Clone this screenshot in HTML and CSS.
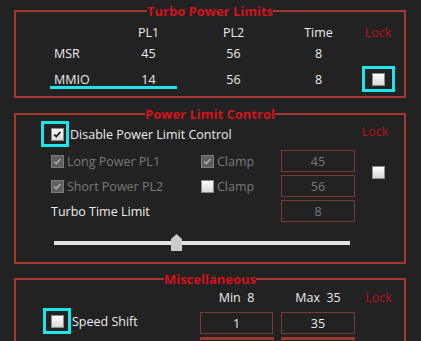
FILE: index.html
```html
<!DOCTYPE html>
<html>
<head>
<meta charset="utf-8">
<title>Power Limits</title>
<link rel="stylesheet" href="styles.css">
</head>
<body>
<div class="app">

  <fieldset class="group turbo">
    <legend>Turbo Power Limits</legend>
    <div class="limits">
      <span></span><span class="num">PL1</span><span class="num">PL2</span><span class="num">Time</span><span class="lock">Lock</span>
      <span class="label">MSR</span><span class="num">45</span><span class="num">56</span><span class="num">8</span><span></span>
      <span class="label">MMIO</span><span class="num">14</span><span class="num">56</span><span class="num">8</span>
      <span class="lockbox"><span class="mark mark-end"><span class="cb"></span></span></span>
    </div>
  </fieldset>

  <fieldset class="group plc">
    <legend>Power Limit Control</legend>
    <div class="plc-grid">
      <label class="opt wide">
        <span class="mark mark-a"><span class="cb on"><svg viewBox="0 0 13 13"><polyline points="2.5,6.5 5,9 10,3.5"/></svg></span></span>
        <span class="txt">Disable Power Limit Control</span>
      </label>
      <span class="lock up">Lock</span>

      <label class="opt dim">
        <span class="cb dis"><svg viewBox="0 0 13 13"><polyline points="2.5,6.5 5,9 10,3.5"/></svg></span>
        <span class="txt">Long Power PL1</span>
      </label>
      <label class="opt dim">
        <span class="cb dis"><svg viewBox="0 0 13 13"><polyline points="2.5,6.5 5,9 10,3.5"/></svg></span>
        <span class="txt">Clamp</span>
      </label>
      <span class="field">45</span>
      <span class="lock side"><span class="cb"></span></span>

      <label class="opt dim">
        <span class="cb dis"><svg viewBox="0 0 13 13"><polyline points="2.5,6.5 5,9 10,3.5"/></svg></span>
        <span class="txt">Short Power PL2</span>
      </label>
      <label class="opt dim">
        <span class="cb"></span>
        <span class="txt">Clamp</span>
      </label>
      <span class="field">56</span>

      <span class="label span2">Turbo Time Limit</span>
      <span class="field">8</span>

      <div class="slider">
        <div class="track"></div>
        <div class="thumb"></div>
      </div>
    </div>
  </fieldset>

  <fieldset class="group misc">
    <legend>Miscellaneous</legend>
    <div class="misc-grid">
      <span></span>
      <span class="head">Min  8</span>
      <span></span>
      <span class="head">Max  35</span>
      <span class="lock">Lock</span>

      <label class="opt">
        <span class="mark mark-b"><span class="cb"></span></span>
        <span class="txt">Speed Shift</span>
      </label>
      <span class="field live low">1</span>
      <span></span>
      <span class="field live low">35</span>
      <span></span>

      <span></span>
      <span class="field next"></span>
      <span></span>
      <span class="field next"></span>
      <span></span>
    </div>
  </fieldset>

</div>
</body>
</html>
```

FILE: styles.css
```css
* { box-sizing: border-box; }
html, body {
  margin: 0; padding: 0;
}
body {
  width: 421px;
  height: 341px;
  overflow: hidden;
  background: #222222;
  color: #ececec;
  font-family: "Open Sans", "Noto Sans", sans-serif;
  font-size: 12.5px;
}

.app {
  padding: 4px 15px 0 14px;
}

.group {
  margin: 0;
  padding: 0;
  min-width: 0;
  border: 2px solid #a5372f;
}
.group legend {
  margin: 0 auto;
  padding: 0;
  font-size: 13px;
  font-weight: bold;
  line-height: 14px;
  color: #d4121c;
}
.turbo { padding: 4px 0 2px; }
.plc { margin-top: 9px; padding: 0 0 10px; }
.misc { margin-top: 8px; padding: 1px 0 20px; }

.lock {
  color: #b8121b;
  text-align: center;
  justify-self: center;
}
.lock.up { margin-bottom: 5px; }

/* turbo power limits table */
.limits {
  position: relative;
  display: grid;
  grid-template-columns: 52px 85px 85px 85px 34px;
  grid-template-rows: 21px 21px 30px;
  padding-left: 38px;
  align-items: center;
}
.num { text-align: center; }
.lockbox { justify-self: end; display: flex; }
/* cyan annotation under the MMIO row */
.limits::after {
  content: "";
  position: absolute;
  left: 34px;
  top: 64px;
  width: 127px;
  height: 3px;
  background: #1ee4ec;
}

/* cyan highlight boxes */
.mark {
  display: flex;
  align-items: center;
  border: 3px solid #1ee4ec;
  height: 26px;
}
.mark-end { width: 33px; justify-content: center; }
.mark-a { width: 28px; padding-left: 7px; margin-left: -10px; }
.mark-b { width: 28px; padding-left: 5px; margin-left: -8px; }

/* checkboxes */
.cb {
  display: inline-block;
  flex: none;
  width: 13px;
  height: 13px;
  border: 1px solid #8c8c8c;
  background: linear-gradient(#fdfdfd, #d9d9d9);
}
.cb svg {
  display: block;
  width: 11px;
  height: 11px;
  fill: none;
  stroke: #111;
  stroke-width: 2;
}
.cb.dis {
  background: #5f5f5f;
  border-color: #7c7c7c;
}
.cb.dis svg { stroke: #a9a9a9; }

.opt {
  display: flex;
  align-items: center;
  gap: 3px;
}
.opt .mark + .txt { margin-left: -2px; }
.dim { color: #7a7a7a; }

/* power limit control */
.plc-grid {
  display: grid;
  grid-template-columns: 150px 80px 74px 40px;
  grid-template-rows: 26px 22px 22px 22px auto;
  row-gap: 3px;
  padding-left: 35px;
  align-items: center;
}
.wide { grid-column: 1 / 4; }
.span2 { grid-column: 1 / 3; }
.side {
  grid-row: 2 / 4;
  grid-column: 4;
  padding-left: 7px;
  padding-bottom: 3px;
  display: flex;
}

.field {
  display: flex;
  align-items: center;
  justify-content: center;
  width: 74px;
  height: 22px;
  border: 1px solid #7d3830;
  color: #7a7a7a;
}
.field.live { color: #ececec; }
.field.low { align-self: end; }
.field.next { border-top: 3px solid #9a3a30; }

.slider {
  grid-column: 1 / -1;
  position: relative;
  margin: 9px 0 0 3px;
  width: 296px;
  height: 18px;
}
.track {
  margin-top: 7px;
  height: 4px;
  background: #e4e4e4;
}
.thumb {
  position: absolute;
  left: 117px;
  top: 0;
  width: 11px;
  height: 17px;
  background: #cbcbcb;
  clip-path: polygon(50% 0, 100% 30%, 100% 100%, 0 100%, 0 30%);
}

/* miscellaneous */
.misc-grid {
  display: grid;
  grid-template-columns: 149px 73px 8px 74px 40px;
  grid-template-rows: 20px 26px 22px;
  row-gap: 1px;
  padding-left: 35px;
  align-items: center;
}
.misc-grid .field:nth-child(7) { width: 73px; }
.misc-grid .next { margin-top: 4px; }
.head {
  white-space: pre;
  text-align: center;
}
.misc .lock { padding-left: 7px; }
```
